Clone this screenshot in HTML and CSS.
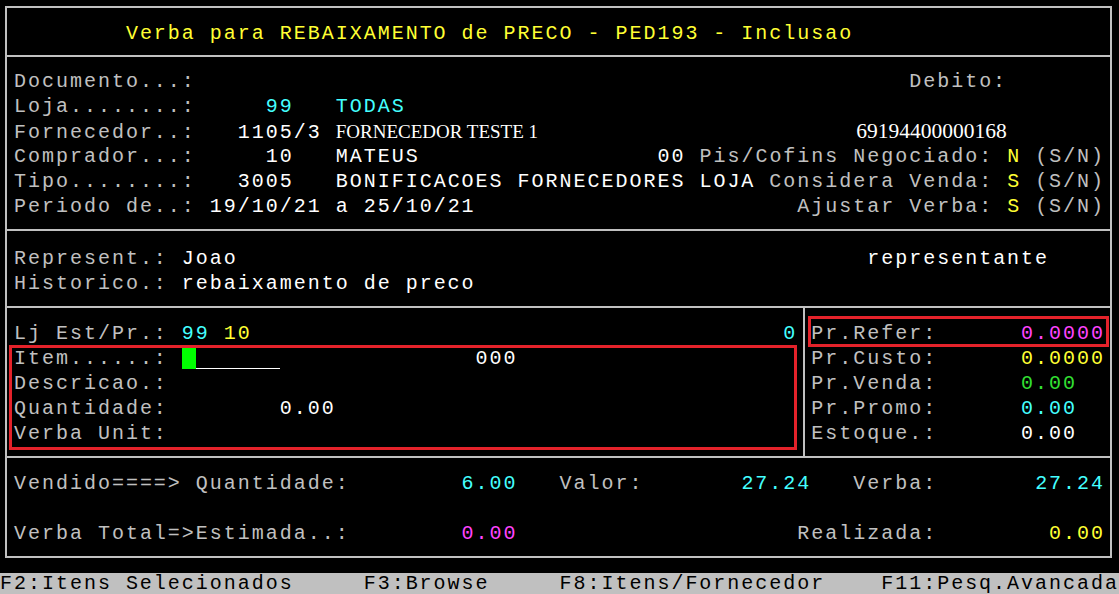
FILE: index.html
```html
<!DOCTYPE html>
<html lang="pt">
<head>
    <meta charset="UTF-8">
    <title>PED193 - Verba para Rebaixamento de Preco</title>
    <link rel="stylesheet" href="styles.css">
</head>
<body>
    <div class="screen">
        <div class="frame">
            <div class="sec title-sec">
                <div class="ln yel">        Verba para REBAIXAMENTO de PRECO - PED193 - Inclusao</div>
            </div>
            <div class="sec head">
                <div class="ln">Documento...:                                                   Debito:</div>
                <div class="ln">Loja........:     <span class="cya">99</span>   <span class="cya">TODAS</span></div>
                <div class="ln">Fornecedor..:   <span class="wht">1105/3</span> <span class="name">FORNECEDOR TESTE 1</span><span class="num">69194400000168</span></div>
                <div class="ln">Comprador...:     <span class="wht">10</span>   <span class="wht">MATEUS</span>                 <span class="wht">00</span> Pis/Cofins Negociado: <span class="yel">N</span> (S/N)</div>
                <div class="ln">Tipo........:   <span class="wht">3005</span>   <span class="wht">BONIFICACOES FORNECEDORES LOJA</span> Considera Venda: <span class="yel">S</span> (S/N)</div>
                <div class="ln">Periodo de..: <span class="wht">19/10/21</span> <span class="wht">a 25/10/21</span>                       Ajustar Verba: <span class="yel">S</span> (S/N)</div>
            </div>
            <div class="sec rep">
                <div class="ln">Represent.: <span class="wht">Joao</span>                                             <span class="wht">representante</span></div>
                <div class="ln">Historico.: <span class="wht">rebaixamento de preco</span></div>
            </div>
            <div class="sec item">
                <div class="pane left">
                    <div class="ln">Lj Est/Pr.: <span class="cya">99</span> <span class="yel">10</span>                                      <span class="cya">0</span></div>
                    <div class="ln">Item......: <span class="cursor"></span><span class="field"></span>              <span class="wht">000</span></div>
                    <div class="ln">Descricao.:</div>
                    <div class="ln">Quantidade:        <span class="wht">0.00</span></div>
                    <div class="ln">Verba Unit:</div>
                </div>
                <div class="pane right">
                    <div class="ln">Pr.Refer:      <span class="mag">0.0000</span></div>
                    <div class="ln">Pr.Custo:      <span class="yel">0.0000</span></div>
                    <div class="ln">Pr.Venda:      <span class="grn">0.00</span></div>
                    <div class="ln">Pr.Promo:      <span class="cya">0.00</span></div>
                    <div class="ln">Estoque.:      <span class="wht">0.00</span></div>
                </div>
            </div>
            <div class="sec totals">
                <div class="ln">Vendido====> Quantidade:        <span class="cya">6.00</span>   Valor:       <span class="cya">27.24</span>   Verba:       <span class="cya">27.24</span></div>
                <div class="ln"></div>
                <div class="ln">Verba Total=>Estimada..:        <span class="mag">0.00</span>                    Realizada:        <span class="yel">0.00</span></div>
            </div>
        </div>
        <div class="statusbar">F2:Itens Selecionados     F3:Browse     F8:Itens/Fornecedor    F11:Pesq.Avancada</div>

        <div class="mark mark-ref"></div>
        <div class="mark mark-item"></div>
    </div>
</body>
</html>
```

FILE: styles.css
```css
body {
    margin: 0;
    background: #000;
    font-family: "Liberation Mono", monospace;
    font-size: 20px;
    letter-spacing: 1.9855px;
    color: #c0c0c0;
}
.screen {
    position: relative;
    width: 1119px;
    height: 594px;
    overflow: hidden;
}
.frame {
    margin: 6px 0 0 5px;
    width: 1107px;
    border: 2px solid #c0c0c0;
    box-sizing: border-box;
}
.sec {
    border-bottom: 2px solid #c0c0c0;
    padding-left: 7px;
}
.sec:last-child {
    border-bottom: 0;
}
.ln {
    height: 25px;
    line-height: 25px;
    white-space: pre;
}
.title-sec {
    padding-top: 13px;
    padding-bottom: 9px;
}
.head {
    padding-top: 12px;
    padding-bottom: 10px;
}
.rep {
    padding-top: 15px;
    padding-bottom: 10px;
}
.item {
    display: grid;
    grid-template-columns: 796px 1fr;
    padding-left: 0;
}
.pane {
    padding-top: 13px;
    padding-bottom: 10px;
}
.pane.left {
    padding-left: 7px;
}
.pane.right {
    border-left: 2px solid #c0c0c0;
    padding-left: 6.3px;
}
.totals {
    padding-top: 13px;
    padding-bottom: 10px;
}

/* colours */
.yel { color: #ffff33; }
.cya { color: #44ffff; }
.wht { color: #ffffff; }
.mag { color: #ff44ff; }
.grn { color: #33e033; }

.name {
    display: inline-block;
    width: calc(37 * 13.9875px);
    font-family: "Liberation Serif", serif;
    font-size: 19px;
    letter-spacing: 0;
    color: #fff;
}
.num {
    margin-left: 3px;
    font-family: "Liberation Serif", serif;
    font-size: 21.5px;
    letter-spacing: 0;
    color: #fff;
}
.cursor {
    display: inline-block;
    width: 13.9875px;
    height: 21px;
    background: #00ff00;
    vertical-align: -5px;
}
.field {
    display: inline-block;
    width: calc(6 * 13.9875px);
    height: 21px;
    border-bottom: 1px solid #fff;
    box-sizing: border-box;
    vertical-align: -5px;
}
.statusbar {
    margin-top: 15px;
    height: 21px;
    line-height: 21px;
    background: #c0c0c0;
    color: #000;
    white-space: pre;
}
.mark {
    position: absolute;
    border: 3px solid #e4222a;
    box-sizing: border-box;
}
.mark-ref {
    left: 808px;
    top: 316px;
    width: 301px;
    height: 31px;
}
.mark-item {
    left: 9px;
    top: 345px;
    width: 788px;
    height: 105px;
}
```
